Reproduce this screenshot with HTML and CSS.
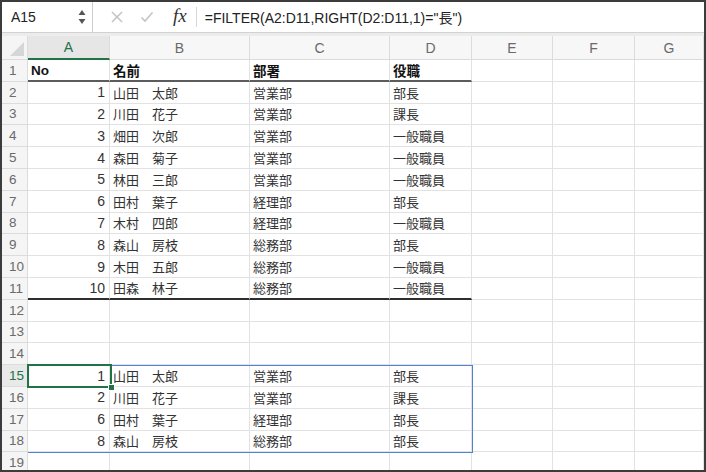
FILE: index.html
```html
<!DOCTYPE html>
<html lang="ja">
<head>
  <meta charset="UTF-8">
  <title>FILTER</title>
  <link rel="stylesheet" href="styles.css">
</head>
<body>
  <div class="window">
    <div class="formula-bar">
      <div class="name-box">
        <span>A15</span>
        <svg class="spinner" viewBox="0 0 8 16">
          <polygon points="4,1 7.5,6 0.5,6" fill="#555"></polygon>
          <polygon points="4,15 7.5,10 0.5,10" fill="#555"></polygon>
        </svg>
      </div>
      <div class="tools">
        <svg class="tool-icon" viewBox="0 0 14 14">
          <line x1="2" y1="2" x2="12" y2="12" stroke="#c4c4c4" stroke-width="1.6"></line>
          <line x1="12" y1="2" x2="2" y2="12" stroke="#c4c4c4" stroke-width="1.6"></line>
        </svg>
        <svg class="tool-icon" viewBox="0 0 14 14">
          <polyline points="1.5,7.5 5,11 12.5,2.5" fill="none" stroke="#c4c4c4" stroke-width="1.6"></polyline>
        </svg>
        <span class="fx">fx</span>
      </div>
      <div class="formula">=FILTER(A2:D11,RIGHT(D2:D11,1)="長")</div>
    </div>

    <div class="sheet">
      <div class="row head">
        <div class="corner"><span class="tri"></span></div>
        <div class="ch active">A</div><div class="ch">B</div><div class="ch">C</div><div class="ch">D</div>
        <div class="ch">E</div><div class="ch">F</div><div class="ch">G</div>
      </div>
      <div class="row">
        <div class="rh">1</div>
        <div class="c bold thick">No</div><div class="c bold thick">名前</div><div class="c bold thick">部署</div><div class="c bold thick">役職</div>
        <div class="c"></div><div class="c"></div><div class="c"></div>
      </div>
      <div class="row">
        <div class="rh">2</div>
        <div class="c num">1</div><div class="c">山田　太郎</div><div class="c">営業部</div><div class="c">部長</div>
        <div class="c"></div><div class="c"></div><div class="c"></div>
      </div>
      <div class="row">
        <div class="rh">3</div>
        <div class="c num">2</div><div class="c">川田　花子</div><div class="c">営業部</div><div class="c">課長</div>
        <div class="c"></div><div class="c"></div><div class="c"></div>
      </div>
      <div class="row">
        <div class="rh">4</div>
        <div class="c num">3</div><div class="c">畑田　次郎</div><div class="c">営業部</div><div class="c">一般職員</div>
        <div class="c"></div><div class="c"></div><div class="c"></div>
      </div>
      <div class="row">
        <div class="rh">5</div>
        <div class="c num">4</div><div class="c">森田　菊子</div><div class="c">営業部</div><div class="c">一般職員</div>
        <div class="c"></div><div class="c"></div><div class="c"></div>
      </div>
      <div class="row">
        <div class="rh">6</div>
        <div class="c num">5</div><div class="c">林田　三郎</div><div class="c">営業部</div><div class="c">一般職員</div>
        <div class="c"></div><div class="c"></div><div class="c"></div>
      </div>
      <div class="row">
        <div class="rh">7</div>
        <div class="c num">6</div><div class="c">田村　葉子</div><div class="c">経理部</div><div class="c">部長</div>
        <div class="c"></div><div class="c"></div><div class="c"></div>
      </div>
      <div class="row">
        <div class="rh">8</div>
        <div class="c num">7</div><div class="c">木村　四郎</div><div class="c">経理部</div><div class="c">一般職員</div>
        <div class="c"></div><div class="c"></div><div class="c"></div>
      </div>
      <div class="row">
        <div class="rh">9</div>
        <div class="c num">8</div><div class="c">森山　房枝</div><div class="c">総務部</div><div class="c">部長</div>
        <div class="c"></div><div class="c"></div><div class="c"></div>
      </div>
      <div class="row">
        <div class="rh">10</div>
        <div class="c num">9</div><div class="c">木田　五郎</div><div class="c">総務部</div><div class="c">一般職員</div>
        <div class="c"></div><div class="c"></div><div class="c"></div>
      </div>
      <div class="row">
        <div class="rh">11</div>
        <div class="c num dark">10</div><div class="c dark">田森　林子</div><div class="c dark">総務部</div><div class="c dark">一般職員</div>
        <div class="c"></div><div class="c"></div><div class="c"></div>
      </div>
      <div class="row">
        <div class="rh">12</div>
        <div class="c"></div><div class="c"></div><div class="c"></div><div class="c"></div>
        <div class="c"></div><div class="c"></div><div class="c"></div>
      </div>
      <div class="row">
        <div class="rh">13</div>
        <div class="c"></div><div class="c"></div><div class="c"></div><div class="c"></div>
        <div class="c"></div><div class="c"></div><div class="c"></div>
      </div>
      <div class="row">
        <div class="rh">14</div>
        <div class="c"></div><div class="c"></div><div class="c"></div><div class="c"></div>
        <div class="c"></div><div class="c"></div><div class="c"></div>
      </div>
      <div class="row">
        <div class="rh active">15</div>
        <div class="c num">1</div><div class="c">山田　太郎</div><div class="c">営業部</div><div class="c">部長</div>
        <div class="c"></div><div class="c"></div><div class="c"></div>
      </div>
      <div class="row">
        <div class="rh">16</div>
        <div class="c num">2</div><div class="c">川田　花子</div><div class="c">営業部</div><div class="c">課長</div>
        <div class="c"></div><div class="c"></div><div class="c"></div>
      </div>
      <div class="row">
        <div class="rh">17</div>
        <div class="c num">6</div><div class="c">田村　葉子</div><div class="c">経理部</div><div class="c">部長</div>
        <div class="c"></div><div class="c"></div><div class="c"></div>
      </div>
      <div class="row">
        <div class="rh">18</div>
        <div class="c num">8</div><div class="c">森山　房枝</div><div class="c">総務部</div><div class="c">部長</div>
        <div class="c"></div><div class="c"></div><div class="c"></div>
      </div>
      <div class="row">
        <div class="rh">19</div>
        <div class="c"></div><div class="c"></div><div class="c"></div><div class="c"></div>
        <div class="c"></div><div class="c"></div><div class="c"></div>
      </div>

      <!-- spill range and active cell -->
      <div class="spill"></div>
      <div class="selection"><span class="handle"></span></div>
    </div>
  </div>
</body>
</html>
```

FILE: styles.css
```css
* {
  margin: 0;
  padding: 0;
  box-sizing: border-box;
}

body {
  background: #fff;
  font-family: 'Liberation Sans', 'Noto Sans CJK JP', sans-serif;
}

.window {
  width: 706px;
  height: 472px;
  border: 2px solid #3c3c3c;
  overflow: hidden;
  background: #fff;
}

/* formula bar */
.formula-bar {
  display: flex;
  align-items: center;
  height: 31px;
  border-bottom: 1px solid #d2d2d2;
}

.name-box {
  display: flex;
  align-items: center;
  justify-content: space-between;
  width: 91px;
  height: 100%;
  padding: 0 6px 0 9px;
  border-right: 1px solid #cfcfcf;
  font-size: 14px;
  color: #222;
}

.spinner {
  width: 8px;
  height: 16px;
}

.tools {
  display: flex;
  align-items: center;
  height: 20px;
  padding: 0 0 0 17px;
  border-right: 1px solid #d6d6d6;
}

.tool-icon {
  width: 14px;
  height: 14px;
  margin-right: 16px;
}

.fx {
  font-family: 'Liberation Serif', serif;
  font-style: italic;
  font-size: 19px;
  color: #333;
  margin: -3px 9px 0 3px;
}

.formula {
  padding-left: 8px;
  font-size: 14px;
  color: #222;
  white-space: nowrap;
}

/* grid */
.sheet {
  position: relative;
  border-top: 3px solid #ececec;
}

.row {
  display: grid;
  grid-template-columns: 26px 82px 140px 140px 82px 81px 82px 69px;
  height: 21.8px;
}

.row.head {
  height: 24px;
}

.corner,
.ch,
.rh {
  background: #f5f5f5;
  border-right: 1px solid #dcdcdc;
  border-bottom: 1px solid #dcdcdc;
  color: #6a6a6a;
  font-size: 14px;
}

.corner {
  position: relative;
}

.tri {
  position: absolute;
  right: 3px;
  bottom: 3px;
  width: 0;
  height: 0;
  border-left: 14px solid transparent;
  border-bottom: 14px solid #d6d6d6;
}

.ch {
  display: flex;
  align-items: center;
  justify-content: center;
  background: #f7f7f7;
}

.ch.active {
  background: #e6e6e6;
  color: #217346;
  border-bottom: 2px solid #217346;
}

.rh {
  display: flex;
  align-items: center;
  padding-left: 7px;
  font-size: 13.5px;
}

.rh.active {
  color: #217346;
  background: #e9e9e9;
}

.c {
  display: flex;
  align-items: center;
  padding-left: 3px;
  border-right: 1px solid #e2e2e2;
  border-bottom: 1px solid #e2e2e2;
  font-size: 13px;
  color: #333;
  white-space: nowrap;
}

.c.num {
  justify-content: flex-end;
  padding: 0 4px 0 0;
  font-size: 14px;
}

.c.bold {
  font-weight: bold;
  color: #111;
  font-size: 13.5px;
}

.c.thick {
  border-bottom: 2px solid #5c5c5c;
}

.c.dark {
  border-bottom: 2px solid #2e2e2e;
}

/* overlays */
.spill {
  position: absolute;
  left: 26px;
  top: 329px;
  width: 445px;
  height: 88px;
  border: 1px solid #4f82d2;
  border-left: none;
}

.selection {
  position: absolute;
  left: 25px;
  top: 328px;
  width: 85px;
  height: 24px;
  border: 2px solid #217346;
}

.handle {
  position: absolute;
  right: -5px;
  bottom: -5px;
  width: 7px;
  height: 7px;
  background: #217346;
  border: 1px solid #fff;
}
```
